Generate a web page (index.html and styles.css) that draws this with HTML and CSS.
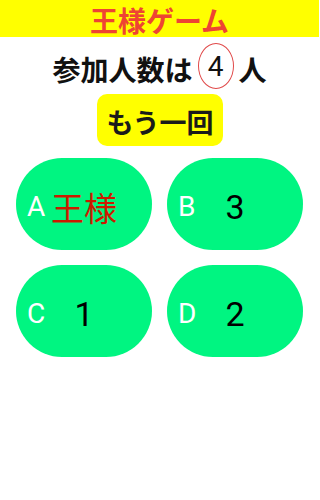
FILE: index.html
```html
<!DOCTYPE html>
<html lang="ja">
<head>
<meta charset="utf-8">
<title>王様ゲーム</title>
<link rel="stylesheet" href="styles.css">
</head>
<body>
<header class="header"><h1 class="title">王様ゲーム</h1></header>
<div class="info">
  <span class="info-text">参加人数は</span>
  <span class="count">4</span>
  <span class="info-text">人</span>
</div>
<div class="again-wrap"><button class="again">もう一回</button></div>
<div class="grid">
  <div class="card"><span class="letter">A</span><span class="value king">王様</span><span></span></div>
  <div class="card"><span class="letter">B</span><span class="value">3</span><span></span></div>
  <div class="card"><span class="letter">C</span><span class="value">1</span><span></span></div>
  <div class="card"><span class="letter">D</span><span class="value">2</span><span></span></div>
</div>
</body>
</html>
```

FILE: styles.css
```css
html, body {
  margin: 0;
  padding: 0;
  background: #ffffff;
}
body {
  font-family: "Roboto", "Noto Sans CJK JP", sans-serif;
  width: 319px;
}
.header {
  background: #ffff00;
  height: 37px;
  display: flex;
  align-items: center;
  justify-content: center;
}
.title {
  margin: 0;
  font-family: "Noto Sans CJK JP", sans-serif;
  font-weight: 700;
  font-size: 28px;
  line-height: 37px;
  color: #ee4433;
  padding-top: 4px;
}
.info {
  margin-top: 5px;
  height: 48px;
  display: flex;
  align-items: center;
  justify-content: center;
  gap: 3px;
}
.info-text {
  font-family: "Noto Sans CJK JP", sans-serif;
  font-weight: 700;
  font-size: 28px;
  line-height: 1;
  color: #111111;
  padding-top: 5px;
}
.count {
  box-sizing: border-box;
  width: 36px;
  height: 46px;
  border: 1.5px solid #e04848;
  border-radius: 50%;
  display: flex;
  align-items: center;
  justify-content: center;
  font-size: 28px;
  color: #111111;
  margin: 0 2px;
  padding-top: 1px;
}
.again-wrap {
  margin-top: 4px;
  display: flex;
  justify-content: center;
}
.again {
  width: 126px;
  height: 52px;
  border: none;
  border-radius: 10px;
  background: #ffff00;
  font-family: "Noto Sans CJK JP", sans-serif;
  font-weight: 700;
  font-size: 27px;
  color: #1a1a1a;
  padding: 3px 0 0;
  margin-left: 1px;
}
.grid {
  margin: 12px 16px 0;
  display: grid;
  grid-template-columns: 136px 136px;
  grid-auto-rows: 92px;
  column-gap: 15px;
  row-gap: 15px;
}
.card {
  background: #00f581;
  border-radius: 46px;
  display: grid;
  grid-template-columns: 1fr auto 1fr;
  align-items: center;
  padding-top: 5px;
  box-sizing: border-box;
}
.letter {
  justify-self: start;
  padding-left: 11px;
  font-size: 28px;
  color: #ffffff;
}
.value {
  font-size: 34px;
  color: #000000;
}
.value.king {
  font-family: "Noto Sans CJK JP", sans-serif;
  font-size: 33px;
  color: #cc1a00;
}
```
